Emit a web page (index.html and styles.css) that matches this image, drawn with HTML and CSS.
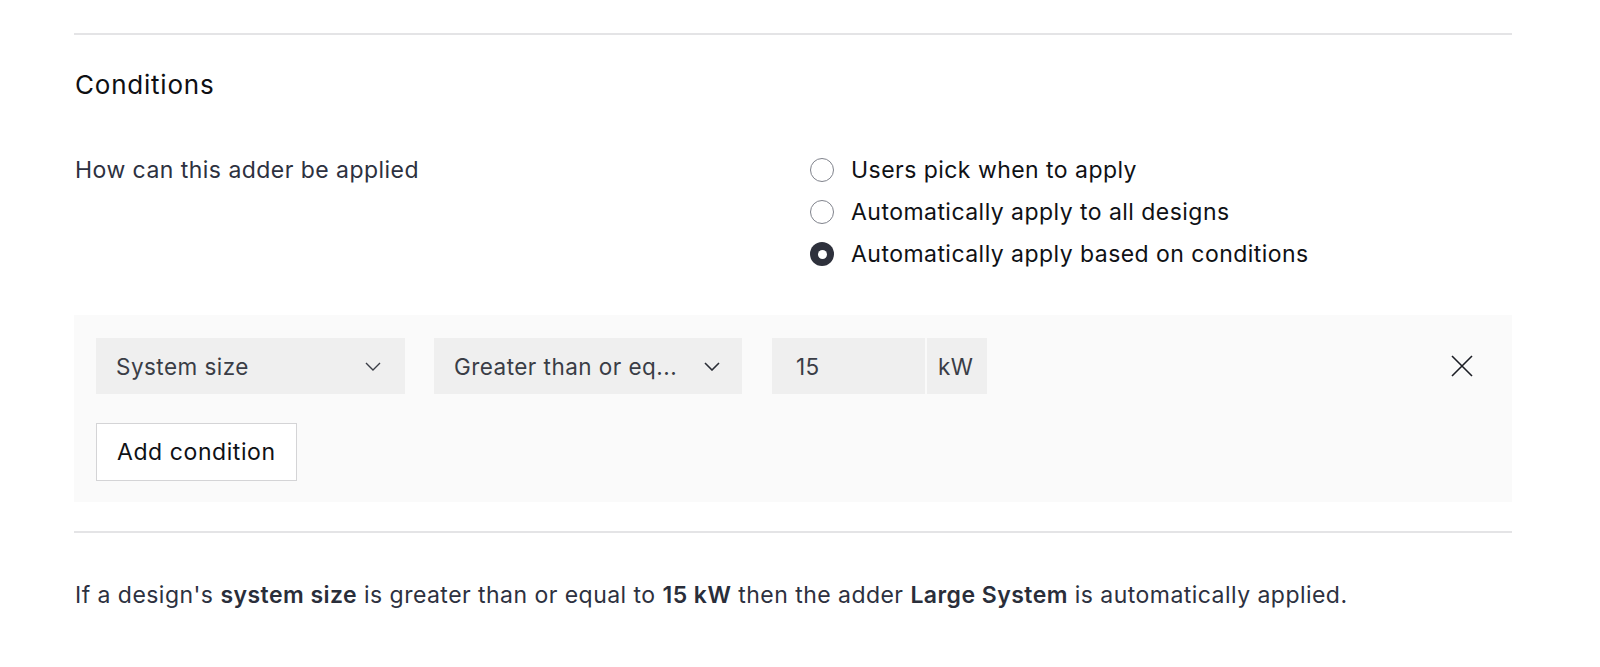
FILE: index.html
```html
<!DOCTYPE html>
<html lang="en">
<head>
<meta charset="utf-8">
<title>Conditions</title>
<link rel="stylesheet" href="styles.css">
</head>
<body>
<div class="page">
  <hr class="rule rule-top">
  <h2 class="title">Conditions</h2>
  <div class="apply-row">
    <div class="apply-label">How can this adder be applied</div>
    <div class="radios">
      <label class="radio"><span class="radio-dot"></span><span class="radio-text">Users pick when to apply</span></label>
      <label class="radio"><span class="radio-dot"></span><span class="radio-text">Automatically apply to all designs</span></label>
      <label class="radio is-checked"><span class="radio-dot"></span><span class="radio-text">Automatically apply based on conditions</span></label>
    </div>
  </div>
  <div class="panel">
    <div class="cond-row">
      <div class="select select-field">
        <span class="select-text">System size</span>
        <svg class="chevron" width="16" height="9" viewBox="0 0 16 9"><path d="M1 1l7 7 7-7" fill="none" stroke="#3a3d46" stroke-width="1.4"/></svg>
      </div>
      <div class="select select-op">
        <span class="select-text">Greater than or eq...</span>
        <svg class="chevron" width="16" height="9" viewBox="0 0 16 9"><path d="M1 1l7 7 7-7" fill="none" stroke="#2a2d36" stroke-width="1.6"/></svg>
      </div>
      <div class="value-group">
        <div class="value-input">15</div>
        <div class="value-unit">kW</div>
      </div>
      <button class="remove" type="button" aria-label="Remove condition">
        <svg width="22" height="22" viewBox="0 0 22 22"><path d="M1 1l20 20M21 1L1 21" fill="none" stroke="#1b1d24" stroke-width="1.6"/></svg>
      </button>
    </div>
    <button class="add-btn" type="button">Add condition</button>
  </div>
  <hr class="rule rule-bottom">
  <p class="summary">If a design's <b>system size</b> is greater than or equal to <b>15 kW</b> then the adder <b>Large System</b> is automatically applied.</p>
</div>
</body>
</html>
```

FILE: styles.css
```css
* { box-sizing: border-box; }
html, body { margin: 0; padding: 0; background: #ffffff; }
body {
  font-family: Inter, "Liberation Sans", sans-serif;
  color: #2d3140;
  font-size: 23px;
  letter-spacing: 0.02em;
}
.page {
  padding: 33px 88px 0 74px;
}
.rule {
  border: 0;
  height: 2px;
  background: #e4e4e6;
  margin: 0;
}
.title {
  margin: 34px 0 0 1px;
  font-size: 26px;
  line-height: 32px;
  font-weight: 400;
  color: #0e0f13;
  letter-spacing: 0.03em;
}
.apply-row {
  display: grid;
  grid-template-columns: 736px 1fr;
  margin-top: 48px;
}
.apply-label {
  line-height: 42px;
  padding-left: 1px;
  color: #2d3140;
}
.radios {
  display: flex;
  flex-direction: column;
}
.radio {
  display: flex;
  align-items: center;
  gap: 17px;
  height: 42px;
  color: #0f1115;
}
.radio-dot {
  width: 24px;
  height: 24px;
  border-radius: 50%;
  border: 1.5px solid #80838c;
  background: #fff;
  flex: none;
  display: flex;
  align-items: center;
  justify-content: center;
}
.is-checked .radio-dot {
  border: 0;
  background: #2e313c;
}
.is-checked .radio-dot::after {
  content: "";
  width: 9px;
  height: 9px;
  border-radius: 50%;
  background: #fff;
}
.panel {
  margin-top: 40px;
  background: #fafafa;
  padding: 23px 30px 21px 22px;
}
.cond-row {
  display: flex;
  align-items: center;
}
.select {
  height: 56px;
  background: #efefef;
  display: flex;
  align-items: center;
  justify-content: space-between;
  padding: 0 24px 0 20px;
  color: #3a3d46;
  font-size: 22.5px;
}
.select-field { width: 309px; margin-right: 29px; }
.select-op { width: 308px; margin-right: 30px; padding-right: 22px; }
.value-group {
  display: flex;
  gap: 2px;
  font-size: 22.5px;
}
.value-input {
  width: 153px;
  height: 56px;
  background: #efefef;
  display: flex;
  align-items: center;
  padding-left: 24px;
  color: #3a3d46;
}
.value-unit {
  width: 60px;
  height: 56px;
  background: #efefef;
  display: flex;
  align-items: center;
  padding-left: 11px;
  color: #3a3d46;
}
.remove {
  margin-left: auto;
  width: 40px;
  height: 40px;
  border: 0;
  background: transparent;
  padding: 0;
  display: flex;
  align-items: center;
  justify-content: center;
}
.add-btn {
  margin-top: 29px;
  height: 58px;
  width: 201px;
  background: #fff;
  border: 1px solid #d4d4d6;
  border-radius: 0;
  font-family: inherit;
  font-size: 23px;
  letter-spacing: 0.025em;
  color: #0f1115;
  text-align: left;
  padding: 0 0 0 20px;
  display: block;
}
.rule-bottom { margin-top: 29px; }
.summary {
  margin: 46px 0 0 1px;
  line-height: 32px;
  color: #2d3140;
}
.summary b { font-weight: 600; color: #2a2e3a; }
```
